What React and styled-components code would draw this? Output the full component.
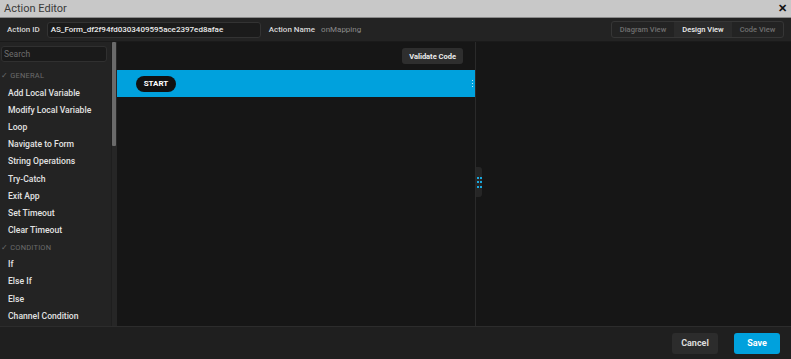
import React from 'react';
import styled, { createGlobalStyle } from 'styled-components';

const GlobalStyle = createGlobalStyle`
  body {
    margin: 0;
    background: #1f1f1f;
    font-family: Roboto, "Liberation Sans", sans-serif;
  }
`;

const Dialog = styled.div`
  width: 791px;
  height: 359px;
  display: flex;
  flex-direction: column;
  overflow: hidden;
`;

const TitleBar = styled.div`
  height: 17px;
  background: #c8c8c8;
  border-bottom: 1px solid #8a8a8a;
  display: flex;
  align-items: center;
  justify-content: space-between;
  padding: 0 4px;
  font-size: 11px;
  color: #3a3a3a;
`;

const Close = styled.span`
  font-size: 11px;
  font-weight: 900;
  color: #111;
`;

const Header = styled.div`
  height: 23px;
  background: #232323;
  border-bottom: 1px solid #1a1a1a;
  display: flex;
  align-items: center;
  padding: 0 7px;
`;

const Label = styled.span`
  font-size: 8px;
  font-weight: 500;
  color: #d8d8d8;
  margin-right: ${p => p.gap || 8}px;
`;

const IdInput = styled.div`
  width: 209px;
  height: 14px;
  border: 1px solid #333;
  border-radius: 3px;
  background: #1b1b1b;
  color: #ececec;
  font-size: 8px;
  font-weight: 500;
  display: flex;
  align-items: center;
  padding-left: 3px;
  margin-right: 8px;
`;

const Value = styled.span`
  font-size: 8px;
  color: #8a8a8a;
`;

const Segmented = styled.div`
  margin-left: auto;
  display: flex;
  height: 15px;
  border: 1px solid #363636;
  border-radius: 3px;
  overflow: hidden;
`;

const Segment = styled.div`
  width: ${p => p.w}px;
  display: flex;
  align-items: center;
  justify-content: center;
  font-size: 7.5px;
  font-weight: 500;
  color: ${p => (p.active ? '#eeeeee' : '#6f6f6f')};
  background: ${p => (p.active ? '#2b2b2b' : 'transparent')};
`;

const Body = styled.div`
  flex: 1;
  display: flex;
  min-height: 0;
`;

const Sidebar = styled.div`
  width: 111px;
  background: #232323;
  padding: 4px 0 0 0;
  display: flex;
  flex-direction: column;
`;

const Search = styled.div`
  margin: 0 4px 0 1px;
  height: 14px;
  border: 1px solid #303030;
  border-radius: 3px;
  background: #1a1a1a;
  color: #6e6e6e;
  font-size: 8.5px;
  display: flex;
  align-items: center;
  padding-left: 2px;
`;

const Group = styled.div`
  height: 17px;
  display: flex;
  align-items: center;
  font-size: 7.5px;
  color: #6c6c6c;
  letter-spacing: 0.2px;
  padding-left: 1px;
  gap: 2px;
  margin-top: ${p => (p.first ? 5 : 0)}px;
`;

const Item = styled.div`
  height: 17.2px;
  display: flex;
  align-items: center;
  padding-left: 8px;
  font-size: 8.6px;
  font-weight: 500;
  color: #e2e2e2;
  white-space: nowrap;
`;

const Track = styled.div`
  width: 5px;
  background: #262626;
  border-left: 1px solid #1e1e1e;
  display: flex;
  flex-direction: column;
`;

const Thumb = styled.div`
  height: 104px;
  width: 4px;
  background: #6a6a6a;
  border-radius: 1px;
`;

const Canvas = styled.div`
  width: 358px;
  background: #161616;
  border-right: 1px solid #2a2a2a;
  display: flex;
  flex-direction: column;
`;

const CanvasTools = styled.div`
  height: 28px;
  display: flex;
  align-items: center;
  justify-content: flex-end;
  padding-right: 12px;
`;

const ToolButton = styled.div`
  height: 16px;
  padding: 0 7px;
  border-radius: 3px;
  background: #2e2e2e;
  color: #ececec;
  font-size: 7.5px;
  font-weight: 700;
  display: flex;
  align-items: center;
`;

const Band = styled.div`
  height: 27px;
  background: #00a1dd;
  display: flex;
  align-items: center;
  padding-left: 19px;
  padding-right: 2px;
`;

const Pill = styled.div`
  height: 16px;
  width: 40px;
  border-radius: 8px;
  background: #111;
  color: #fff;
  font-size: 8px;
  font-weight: 700;
  display: flex;
  align-items: center;
  justify-content: center;
`;

const Kebab = styled.div`
  margin-left: auto;
  display: flex;
  flex-direction: column;
  gap: 1.5px;
  span {
    width: 1.5px;
    height: 1.5px;
    background: #bfe8f7;
  }
`;

const RightPanel = styled.div`
  flex: 1;
  background: #161616;
  display: flex;
  align-items: center;
  padding-bottom: 4px;
`;

const Handle = styled.div`
  width: 6px;
  height: 30px;
  background: #262626;
  border-radius: 0 3px 3px 0;
  display: grid;
  grid-template-columns: repeat(2, 2px);
  grid-auto-rows: 2px;
  column-gap: 1px;
  row-gap: 2.5px;
  align-content: center;
  justify-content: center;
  span {
    background: #19a9e0;
  }
`;

const Footer = styled.div`
  height: 32px;
  background: #1f1f1f;
  border-top: 1px solid #2c2c2c;
  display: flex;
  align-items: center;
  justify-content: flex-end;
  gap: 16px;
  padding-right: 11px;
`;

const Button = styled.div`
  width: 46px;
  height: 21px;
  border-radius: 3px;
  background: ${p => (p.primary ? '#00a1dd' : '#2c2c2c')};
  color: ${p => (p.primary ? '#fff' : '#dcdcdc')};
  font-size: 9px;
  font-weight: 700;
  display: flex;
  align-items: center;
  justify-content: center;
`;

const groups = [
  {
    name: 'GENERAL',
    items: ['Add Local Variable', 'Modify Local Variable', 'Loop', 'Navigate to Form', 'String Operations', 'Try-Catch', 'Exit App', 'Set Timeout', 'Clear Timeout'],
  },
  {
    name: 'CONDITION',
    items: ['If', 'Else If', 'Else', 'Channel Condition'],
  },
];

function App() {
  return (
    <Dialog>
      <GlobalStyle />
      <TitleBar>
        <span>Action Editor</span>
        <Close>✕</Close>
      </TitleBar>
      <Header>
        <Label gap={7}>Action ID</Label>
        <IdInput>AS_Form_df2f94fd0303409595ace2397ed8afae</IdInput>
        <Label gap={6}>Action Name</Label>
        <Value>onMapping</Value>
        <Segmented>
          <Segment w={62}>Diagram View</Segment>
          <Segment w={58} active>Design View</Segment>
          <Segment w={51}>Code View</Segment>
        </Segmented>
      </Header>
      <Body>
        <Sidebar>
          <Search>Search</Search>
          {groups.map((g, gi) => (
            <div key={g.name}>
              <Group first={gi === 0}>
                <span>✓</span>
                <span>{g.name}</span>
              </Group>
              {g.items.map(it => (
                <Item key={it}>{it}</Item>
              ))}
            </div>
          ))}
        </Sidebar>
        <Track>
          <Thumb />
        </Track>
        <Canvas>
          <CanvasTools>
            <ToolButton>Validate Code</ToolButton>
          </CanvasTools>
          <Band>
            <Pill>START</Pill>
            <Kebab>
              <span />
              <span />
              <span />
            </Kebab>
          </Band>
        </Canvas>
        <RightPanel>
          <Handle>
            <span /><span /><span /><span /><span /><span />
          </Handle>
        </RightPanel>
      </Body>
      <Footer>
        <Button>Cancel</Button>
        <Button primary>Save</Button>
      </Footer>
    </Dialog>
  );
}

export default App;
